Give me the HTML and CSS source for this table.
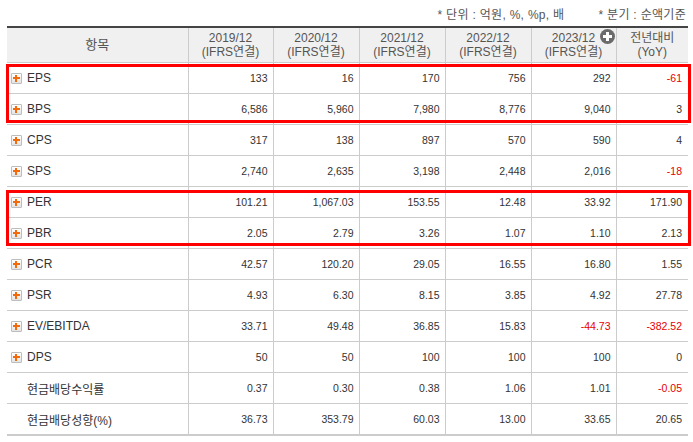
FILE: index.html
```html
<!DOCTYPE html>
<html lang="ko">
<head>
<meta charset="utf-8">
<link rel="stylesheet" href="styles.css">
</head>
<body>
<div class="wrap">
  <div class="notes">
    <span>* 단위 : 억원, %, %p, 배</span>
    <span>* 분기 : 순액기준</span>
  </div>
  <div class="tablebox">
    <table class="fin">
      <colgroup>
        <col class="c0"><col class="c1"><col class="c2"><col class="c3"><col class="c4"><col class="c5"><col class="c6">
      </colgroup>
      <thead>
        <tr>
          <th>항목</th>
          <th>2019/12<br>(IFRS연결)</th>
          <th>2020/12<br>(IFRS연결)</th>
          <th>2021/12<br>(IFRS연결)</th>
          <th>2022/12<br>(IFRS연결)</th>
          <th class="has-more">2023/12<br>(IFRS연결)<span class="more"></span></th>
          <th>전년대비<br>(YoY)</th>
        </tr>
      </thead>
      <tbody>
        <tr><td class="lbl"><span class="pl"></span>EPS</td><td>133</td><td>16</td><td>170</td><td>756</td><td>292</td><td class="neg">-61</td></tr>
        <tr><td class="lbl"><span class="pl"></span>BPS</td><td>6,586</td><td>5,960</td><td>7,980</td><td>8,776</td><td>9,040</td><td>3</td></tr>
        <tr><td class="lbl"><span class="pl"></span>CPS</td><td>317</td><td>138</td><td>897</td><td>570</td><td>590</td><td>4</td></tr>
        <tr><td class="lbl"><span class="pl"></span>SPS</td><td>2,740</td><td>2,635</td><td>3,198</td><td>2,448</td><td>2,016</td><td class="neg">-18</td></tr>
        <tr><td class="lbl"><span class="pl"></span>PER</td><td>101.21</td><td>1,067.03</td><td>153.55</td><td>12.48</td><td>33.92</td><td>171.90</td></tr>
        <tr><td class="lbl"><span class="pl"></span>PBR</td><td>2.05</td><td>2.79</td><td>3.26</td><td>1.07</td><td>1.10</td><td>2.13</td></tr>
        <tr><td class="lbl"><span class="pl"></span>PCR</td><td>42.57</td><td>120.20</td><td>29.05</td><td>16.55</td><td>16.80</td><td>1.55</td></tr>
        <tr><td class="lbl"><span class="pl"></span>PSR</td><td>4.93</td><td>6.30</td><td>8.15</td><td>3.85</td><td>4.92</td><td>27.78</td></tr>
        <tr><td class="lbl"><span class="pl"></span>EV/EBITDA</td><td>33.71</td><td>49.48</td><td>36.85</td><td>15.83</td><td class="neg">-44.73</td><td class="neg">-382.52</td></tr>
        <tr><td class="lbl"><span class="pl"></span>DPS</td><td>50</td><td>50</td><td>100</td><td>100</td><td>100</td><td>0</td></tr>
        <tr><td class="lbl sub">현금배당수익률</td><td>0.37</td><td>0.30</td><td>0.38</td><td>1.06</td><td>1.01</td><td class="neg">-0.05</td></tr>
        <tr><td class="lbl sub">현금배당성향(%)</td><td>36.73</td><td>353.79</td><td>60.03</td><td>13.00</td><td>33.65</td><td>20.65</td></tr>
      </tbody>
    </table>
    <div class="hl hl1"></div>
    <div class="hl hl2"></div>
  </div>
</div>
</body>
</html>
```

FILE: styles.css
```css
html, body {
  margin: 0;
  padding: 0;
  background: #fff;
}
body {
  font-family: "Liberation Sans", "Noto Sans CJK KR", sans-serif;
  color: #333;
}
.wrap {
  width: 693px;
}
.notes {
  height: 26px;
  display: flex;
  justify-content: flex-end;
  align-items: center;
  gap: 34px;
  padding-right: 7px;
  font-size: 12px;
  color: #555;
  letter-spacing: 0.3px;
  font-family: "Liberation Sans", "Noto Sans CJK KR", sans-serif;
}
.tablebox {
  position: relative;
  margin-left: 7px;
  width: 681px;
}
.fin {
  border-collapse: collapse;
  table-layout: fixed;
  width: 681px;
  border-top: 2px solid #444;
  border-bottom: 2px solid #ccc;
}
.c0 { width: 181px; }
.c1 { width: 85px; }
.c2 { width: 86px; }
.c3 { width: 86px; }
.c4 { width: 86px; }
.c5 { width: 85px; }
.c6 { width: 72px; }
.fin th {
  background: #f0f0f0;
  height: 34px;
  padding: 0;
  font-weight: normal;
  font-size: 12px;
  line-height: 14px;
  color: #555;
  text-align: center;
  border-left: 1px solid #ccc;
  border-bottom: 1px solid #ccc;
  font-family: "Liberation Sans", "Noto Sans CJK KR", sans-serif;
}
.fin th:first-child { border-left: none; font-size: 13px; }
.fin th.has-more { position: relative; }
.more {
  position: absolute;
  right: 1px;
  top: 1px;
  width: 15px;
  height: 15px;
  border-radius: 50%;
  background: #6b6b6b;
}
.more::before, .more::after {
  content: "";
  position: absolute;
  background: #fff;
  left: 3px;
  top: 6px;
  width: 9px;
  height: 3px;
}
.more::after {
  left: 6px;
  top: 3px;
  width: 3px;
  height: 9px;
}
.fin td {
  height: 30px;
  padding: 0 5px 0 0;
  text-align: right;
  font-size: 10.5px;
  color: #333;
  border-left: 1px solid #ccc;
  border-bottom: 1px solid #ccc;
  white-space: nowrap;
  font-family: "Liberation Sans", sans-serif;
}
.fin td:last-child { padding-right: 6px; }
.fin td.lbl {
  text-align: left;
  border-left: none;
  padding: 0 0 0 4px;
  font-size: 12px;
  color: #333;
  font-family: "Liberation Sans", "Noto Sans CJK KR", sans-serif;
}
.fin td.sub { padding-left: 20px; }
.fin td.neg { color: #e60000; }
.pl {
  display: inline-block;
  vertical-align: -2px;
  width: 11px;
  height: 11px;
  box-sizing: border-box;
  border: 1px solid #bdbdbd;
  border-radius: 1px;
  background: linear-gradient(#ffffff, #e4e4e4);
  margin-right: 5px;
  position: relative;
}
.pl::before, .pl::after {
  content: "";
  position: absolute;
  background: #f46a0a;
  left: 1px;
  top: 3px;
  width: 7px;
  height: 2px;
}
.pl::after {
  left: 3px;
  top: 1px;
  width: 2px;
  height: 7px;
}
.hl {
  position: absolute;
  left: -1px;
  width: 685px;
  box-sizing: border-box;
  border: 3px solid #ff0000;
  pointer-events: none;
}
.hl1 { top: 38px; height: 59px; }
.hl2 { top: 164px; height: 56px; }
```
